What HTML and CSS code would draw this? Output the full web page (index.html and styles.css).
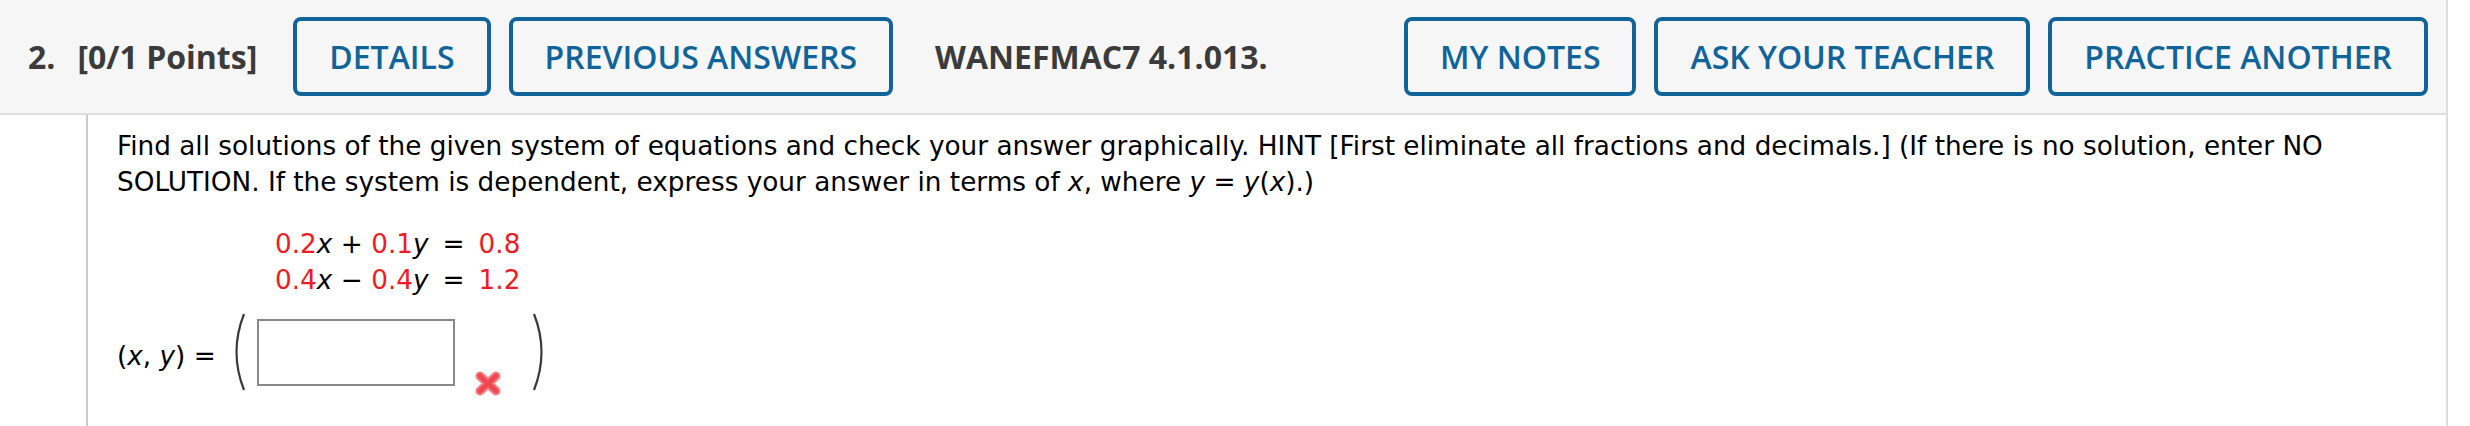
FILE: index.html
```html
<!DOCTYPE html>
<html lang="en">
<head>
    <meta charset="UTF-8">
    <title>Question 2</title>
    <link rel="stylesheet" href="styles.css">
</head>
<body>
    <div class="question">
        <div class="q-header">
            <span class="q-number">2.</span>
            <span class="q-points">[0/1 Points]</span>
            <button class="q-btn">DETAILS</button>
            <button class="q-btn">PREVIOUS ANSWERS</button>
            <span class="q-title">WANEFMAC7 4.1.013.</span>
            <div class="q-actions">
                <button class="q-btn">MY NOTES</button>
                <button class="q-btn">ASK YOUR TEACHER</button>
                <button class="q-btn">PRACTICE ANOTHER</button>
            </div>
        </div>

        <div class="q-body">
            <p class="q-text">Find all solutions of the given system of equations and check your answer graphically. HINT [First eliminate all fractions and decimals.] (If there is no solution, enter NO SOLUTION. If the system is dependent, express your answer in terms of <i>x</i>, where <i>y</i> = <i>y</i>(<i>x</i>).)</p>

            <table class="system">
                <tr>
                    <td><span class="num">0.2</span><i>x</i> + <span class="num">0.1</span><i>y</i></td>
                    <td class="eq">=</td>
                    <td><span class="num">0.8</span></td>
                </tr>
                <tr>
                    <td><span class="num">0.4</span><i>x</i> &minus; <span class="num">0.4</span><i>y</i></td>
                    <td class="eq">=</td>
                    <td><span class="num">1.2</span></td>
                </tr>
            </table>

            <div class="answer">
                <span class="answer-label">(<i>x</i>, <i>y</i>) =</span>
                <svg class="paren" width="18" height="78" viewBox="0 0 18 78">
                    <path d="M16 1 Q1 39 16 77" fill="none" stroke="#3a3a3a" stroke-width="2.2"/>
                </svg>
                <input type="text" class="answer-input">
                <svg class="wrong" width="28" height="27" viewBox="0 0 28 27">
                    <path d="M6 6 L22 21 M22 6 L6 21" stroke="#f47a80" stroke-width="9" stroke-linecap="round"/>
                    <path d="M6 6 L22 21 M22 6 L6 21" stroke="#ee4852" stroke-width="5" stroke-linecap="round"/>
                </svg>
                <svg class="paren" width="18" height="78" viewBox="0 0 18 78">
                    <path d="M2 1 Q17 39 2 77" fill="none" stroke="#3a3a3a" stroke-width="2.2"/>
                </svg>
            </div>
        </div>
    </div>
</body>
</html>
```

FILE: styles.css
```css
body {
    margin: 0;
    background: #fff;
    font-family: "DejaVu Sans", Verdana, sans-serif;
    color: #000;
}
.question {
    width: 2448px;
}
.q-header {
    display: flex;
    align-items: center;
    height: 113px;
    padding: 0 18px 0 28px;
    background: #f6f6f6;
    border-right: 2px solid #dddddd;
    border-bottom: 2px solid #dddddd;
    font-family: "Open Sans", sans-serif;
}
.q-number, .q-points, .q-title {
    font-size: 32px;
    font-weight: 700;
    color: #3b3b3b;
}
.q-number {
    margin-right: 22px;
}
.q-points {
    margin-right: 36px;
}
.q-title {
    margin-left: 24px;
}
.q-btn {
    height: 79px;
    padding: 0 32px;
    margin-right: 18px;
    background: transparent;
    border: 4px solid #10649a;
    border-radius: 8px;
    color: #10649a;
    font-family: "Open Sans", sans-serif;
    font-size: 32px;
    font-weight: 600;
    cursor: pointer;
}
.q-actions {
    margin-left: auto;
    display: flex;
}
.q-actions .q-btn:last-child {
    margin-right: 0;
}
.q-body {
    margin-left: 86px;
    height: 311px;
    padding: 13px 29px 0 29px;
    border-left: 2px solid #cccccc;
    border-right: 2px solid #dddddd;
    font-size: 26.3px;
    line-height: 36px;
}
.q-text {
    margin: 0;
}
.system {
    margin: 26px 0 0 158px;
    border-collapse: collapse;
}
.system td {
    padding: 0;
}
.system .eq {
    padding: 0 14px;
}
.num {
    color: #ee1c25;
}
.answer {
    display: flex;
    align-items: center;
    margin-top: 15px;
    height: 78px;
}
.answer-label {
    padding-top: 8px;
    margin-right: 12px;
}
.answer-input {
    width: 198px;
    height: 67px;
    box-sizing: border-box;
    margin: 0 0 0 11px;
    border: 2px solid #888;
    background: #fff;
}
.wrong {
    align-self: flex-end;
    margin: 0 30px -6px 19px;
}
```
